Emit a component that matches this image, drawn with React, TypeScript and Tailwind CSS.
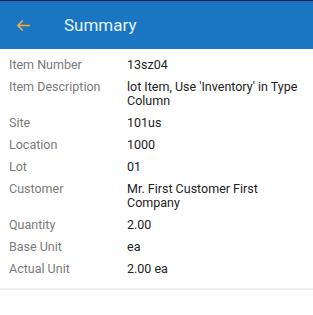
import React from "react";

const rows: [string, string][] = [
  ["Item Number", "13sz04"],
  ["Item Description", "lot Item, Use 'Inventory' in Type Column"],
  ["Site", "101us"],
  ["Location", "1000"],
  ["Lot", "01"],
  ["Customer", "Mr. First Customer First Company"],
  ["Quantity", "2.00"],
  ["Base Unit", "ea"],
  ["Actual Unit", "2.00 ea"],
];

export default function App() {
  return (
    <div
      className="w-[313px] h-[315px] bg-white overflow-hidden"
      style={{ fontFamily: "Roboto, 'Noto Sans', sans-serif" }}
    >
      <div className="h-[1px] bg-[#1b1d4a]" />
      <div className="h-[48px] bg-[#1a76c2] flex items-center pl-[16px]">
        <svg width="14" height="11" viewBox="0 0 14 11" fill="none">
          <path
            d="M13.5 5.5H1.8M6.3 1L1.8 5.5L6.3 10"
            stroke="#f2ab3a"
            strokeWidth="1.7"
            strokeLinecap="round"
            strokeLinejoin="round"
          />
        </svg>
        <span className="ml-[34px] text-[17px] leading-[20px] text-[#e6f2fd] mt-[-1px]">
          Summary
        </span>
      </div>
      <div className="pt-[5px] pl-[9px] pr-[10px]">
        {rows.map(([k, v]) => (
          <div key={k} className="grid grid-cols-[118px_1fr] py-[4px] text-[12.5px] leading-[14px]">
            <div className="text-[#7a7a7a]">{k}</div>
            <div className="text-[#222222]">{v}</div>
          </div>
        ))}
      </div>
      <div className="mt-[8px] h-[2px] bg-[#efefef]" />
    </div>
  );
}
